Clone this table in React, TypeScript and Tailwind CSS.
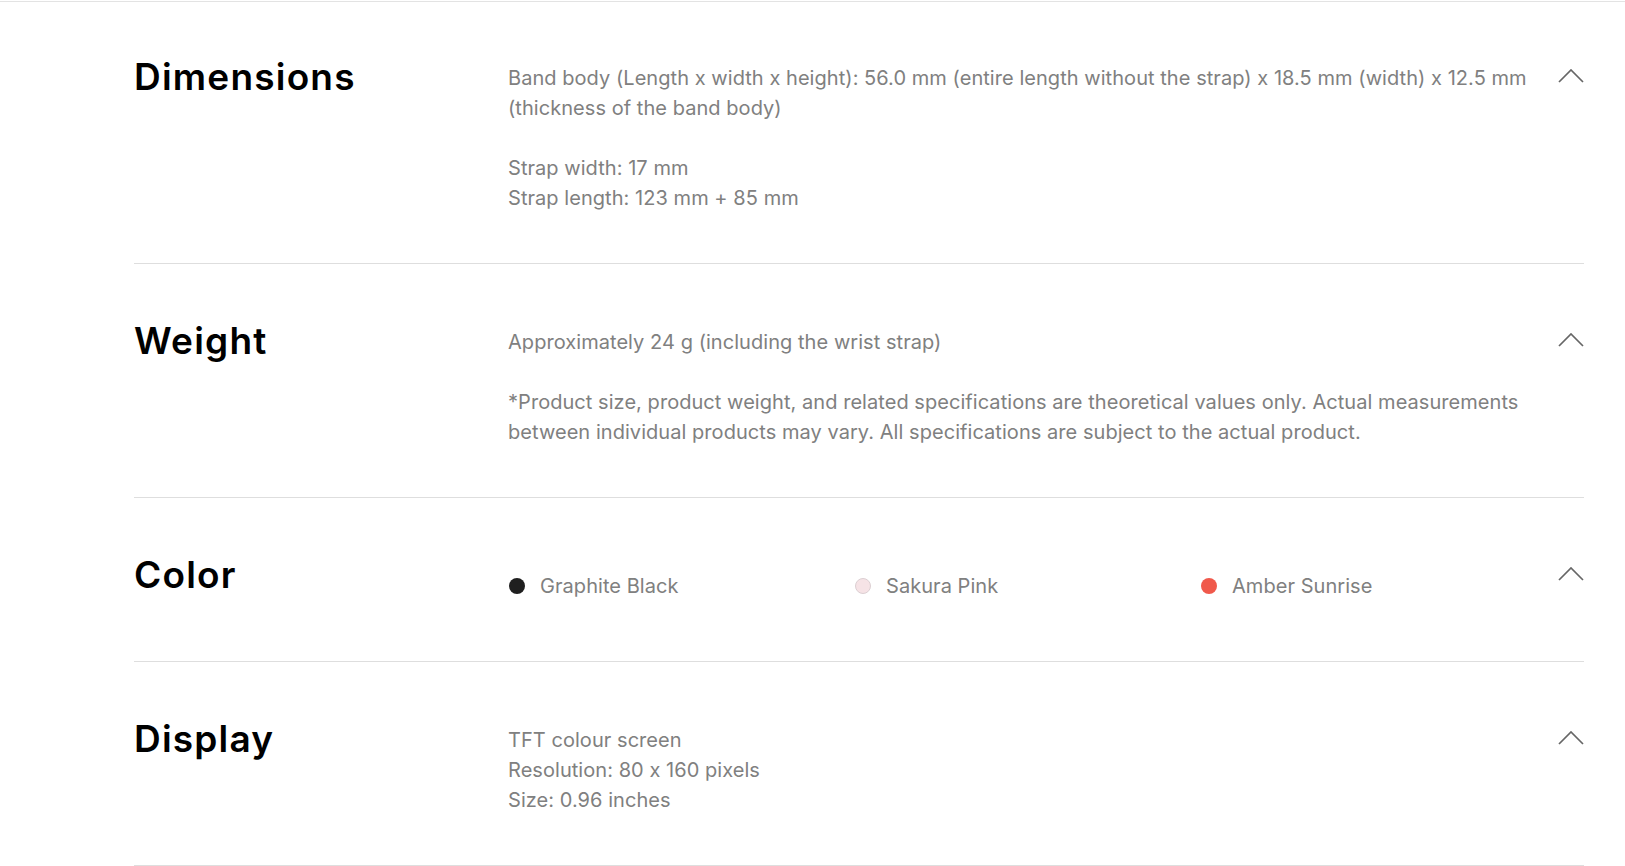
import React from "react";

const Chevron = () => (
  <svg width="26" height="14" viewBox="0 0 26 14" fill="none" className="block">
    <polyline points="1,13 13,1 25,13" stroke="#666666" strokeWidth="1.7" strokeLinejoin="miter" />
  </svg>
);

const Row = ({
  title,
  first,
  children,
}: {
  title: string;
  first?: boolean;
  children: React.ReactNode;
}) => (
  <div
    className={`flex items-start pb-[50px] border-b border-[#dedede] ${first ? "pt-[61px]" : "pt-[63px]"}`}
  >
    <div className="w-[374px] shrink-0 text-[37px] leading-[28px] font-semibold text-black tracking-[1.2px]">
      {title}
    </div>
    <div className="w-[1038px] shrink-0 text-[20px] leading-[30px] text-[#808080] tracking-[0.05px]">
      {children}
    </div>
    <div className="ml-auto pt-[6px]">
      <Chevron />
    </div>
  </div>
);

const Dot = ({ cls }: { cls: string }) => (
  <span className={`inline-block w-[16px] h-[16px] rounded-full ${cls}`} />
);

export default function App() {
  return (
    <div
      className="w-[1625px] h-[866px] bg-white overflow-hidden"
      style={{ fontFamily: "Inter, 'Noto Sans', sans-serif" }}
    >
      <div className="h-px" />
      <div className="border-t border-[#e3e3e3]" />
      <div className="ml-[134px] w-[1450px]">
        <Row title="Dimensions" first>
          <p className="whitespace-nowrap">
            Band body (Length x width x height): 56.0 mm (entire length without the strap) x 18.5 mm (width) x 12.5 mm
          </p>
          <p>(thickness of the band body)</p>
          <p className="mt-[30px]">Strap width: 17 mm</p>
          <p>Strap length: 123 mm + 85 mm</p>
        </Row>
        <Row title="Weight">
          <p>Approximately 24 g (including the wrist strap)</p>
          <p className="mt-[30px] whitespace-nowrap">
            *Product size, product weight, and related specifications are theoretical values only. Actual measurements
          </p>
          <p className="whitespace-nowrap">
            between individual products may vary. All specifications are subject to the actual product.
          </p>
        </Row>
        <Row title="Color">
          <div className="grid grid-cols-3 h-[50px] items-center">
            <div className="flex items-center gap-[15px]">
              <Dot cls="ml-px bg-[#1f1f1f]" />
              <span>Graphite Black</span>
            </div>
            <div className="flex items-center gap-[15px]">
              <Dot cls="ml-px bg-[#f6e3e6] border border-[#dccfd2]" />
              <span>Sakura Pink</span>
            </div>
            <div className="flex items-center gap-[15px]">
              <Dot cls="ml-px bg-[#f0594b]" />
              <span>Amber Sunrise</span>
            </div>
          </div>
        </Row>
        <Row title="Display">
          <p>TFT colour screen</p>
          <p>Resolution: 80 x 160 pixels</p>
          <p>Size: 0.96 inches</p>
        </Row>
      </div>
    </div>
  );
}
